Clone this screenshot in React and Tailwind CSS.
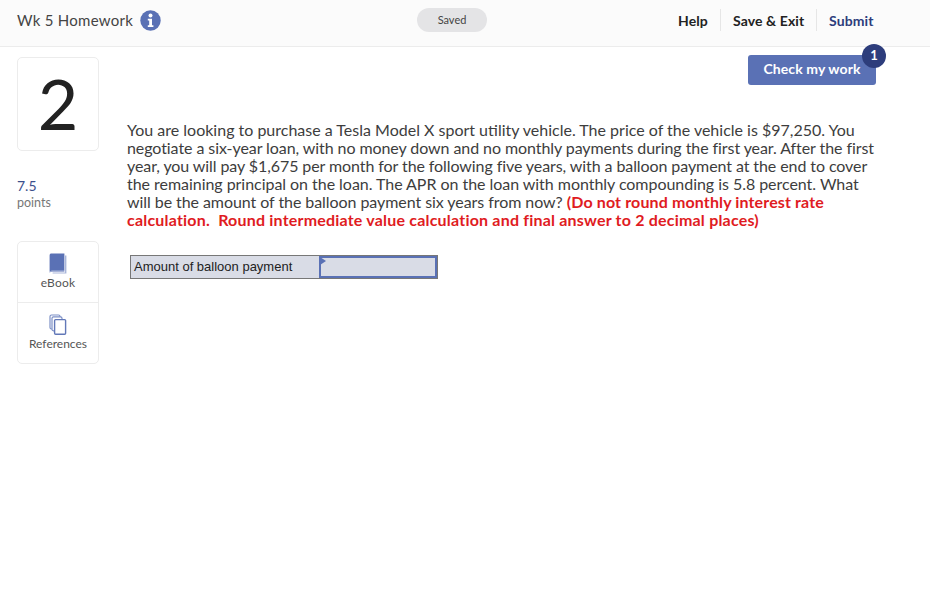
export default function App() {
  return (
    <div className="w-[930px] h-[612px] bg-white overflow-hidden text-[#333] font-['Lato','Liberation_Sans',sans-serif]">
      <header className="h-[47px] bg-[#fbfbfb] border-b border-[#ececec] flex items-center pl-[17px] pb-[6px]">
        <div className="w-[400px] flex items-center gap-[7px] h-full">
          <span className="text-[15px] text-[#444] tracking-[0.27px]">Wk 5 Homework</span>
          <svg width="21" height="21" viewBox="0 0 21 21">
            <circle cx="10.5" cy="10.5" r="10.2" fill="#5a71b5" />
            <circle cx="10.5" cy="5.6" r="2" fill="#fff" />
            <path d="M7.8 8.8h4.2v6.4h1.4v1.7H7.8v-1.7h1.4v-4.7H7.8z" fill="#fff" />
          </svg>
        </div>
        <div className="w-[70px] h-[24px] rounded-full bg-[#e4e4e6] flex items-center justify-center text-[11px] text-[#444]">Saved</div>
        <nav className="flex items-center ml-[191px] text-[14px] font-bold tracking-[0.1px]">
          <span className="w-[43px] h-[22px] flex items-center border-r border-[#e6e6e6] text-[#222]">Help</span>
          <span className="w-[96px] pl-[12px] h-[22px] flex items-center border-r border-[#e6e6e6] text-[#222]">Save &amp; Exit</span>
          <span className="pl-[12px] text-[#2d3d7c]">Submit</span>
        </nav>
      </header>
      <div className="flex pl-[17px] pt-[10px]">
        <aside className="w-[82px] shrink-0">
          <div className="h-[94px] border border-[#ececec] rounded-[5px] flex items-center justify-center text-[70px] leading-none text-[#222] pb-[2px]">2</div>
          <div className="mt-[27px] text-[14px] leading-[16px] text-[#3c4f8c]">7.5</div>
          <div className="text-[12.5px] leading-[16px] mt-[1px] text-[#777]">points</div>
          <div className="mt-[30px] border border-[#ececec] rounded-[5px] h-[123px] flex flex-col">
            <div className="h-[61px] border-b border-[#ececec] flex flex-col items-center pt-[11px]">
              <svg width="18" height="21" viewBox="0 0 18 21">
                <path d="M16 2.5h1.4V20.6H3.6v-1H16z" fill="#a9b6da" />
                <path d="M0.6 2.4C0.6 1.2 1.4.6 2.4.6H15.4v17.2H3c-1 0-1.9.3-2.4.9z" fill="#5a71b5" />
                <path d="M.6 18.7c.5-.6 1.4-.9 2.4-.9h12.4v1H3c-1 0-1.9.3-2.4.9z" fill="#8a9bcb" />
              </svg>
              <span className="text-[12px] leading-[14px] mt-[2px] text-[#555] tracking-[0.2px]">eBook</span>
            </div>
            <div className="flex-1 flex flex-col items-center pt-[11px]">
              <svg width="18" height="21" viewBox="0 0 18 21" fill="#fff" stroke="#7d90c6" strokeWidth="1.2">
                <rect x="1" y="1" width="10" height="14" rx="1.5" />
                <rect x="3" y="2.8" width="10" height="14" rx="1.5" />
                <rect x="5.6" y="5.6" width="11" height="14.6" rx="1" stroke="#6278b8" strokeWidth="1.4" />
              </svg>
              <span className="text-[12px] leading-[14px] mt-[2px] text-[#555]">References</span>
            </div>
          </div>
        </aside>
        <main className="ml-[28px] w-[749px]">
          <div className="flex justify-end -mt-[2px]">
            <button className="relative w-[128px] h-[30px] bg-[#5a71b5] rounded-[3px] text-white font-bold text-[14px] tracking-[0.1px] pb-[3px]">
              Check my work
              <span className="absolute -top-[11px] -right-[10px] w-[24px] h-[24px] rounded-full bg-[#2d3d7c] text-[13px] flex items-center justify-center tracking-normal">1</span>
            </button>
          </div>
          <p className="mt-[36px] text-[16px] leading-[18px] text-[#3d3d3d] whitespace-nowrap">
            You are looking to purchase a Tesla Model X sport utility vehicle. The price of the vehicle is $97,250. You<br />
            <span className="tracking-[-0.075px]">negotiate a six-year loan, with no money down and no monthly payments during the first year. After the first</span><br />
            <span className="tracking-[-0.085px]">year, you will pay $1,675 per month for the following five years, with a balloon payment at the end to cover</span><br />
            <span className="tracking-[-0.04px]">the remaining principal on the loan. The APR on the loan with monthly compounding is 5.8 percent. What</span><br />
            <span className="tracking-[-0.065px]">will be the amount of the balloon payment six years from now?</span>{" "}
            <b className="text-[#e01b22] tracking-[0.13px]">(Do not round monthly interest rate<br />
            <span className="tracking-[0.2px]">calculation.&nbsp; Round intermediate value calculation and final answer to 2 decimal places)</span></b>
          </p>
          <div className="mt-[26px] ml-[3px] flex w-[308px] h-[24px] bg-[#d9dce6] border border-[#777] font-['Liberation_Sans',sans-serif] text-[13px] text-[#222]">
            <div className="w-[188px] pl-[3px] flex items-center">Amount of balloon payment</div>
            <div className="relative flex-1 border-2 border-[#5a71b5]">
              <span className="absolute -top-[1px] -left-[1px] w-0 h-0 border-y-[4px] border-y-transparent border-l-[6px] border-l-[#5a71b5]" />
            </div>
          </div>
        </main>
      </div>
    </div>
  );
}
